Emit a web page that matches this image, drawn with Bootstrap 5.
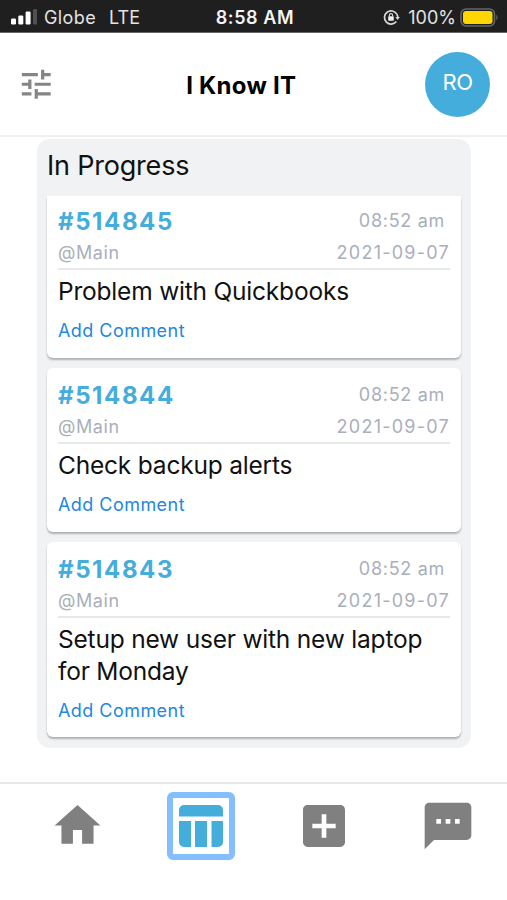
<!DOCTYPE html>
<html lang="en">
<head>
<meta charset="utf-8">
<meta name="viewport" content="width=device-width, initial-scale=1">
<title>I Know IT</title>
<link href="https://cdn.jsdelivr.net/npm/bootstrap@5.3.0/dist/css/bootstrap.min.css" rel="stylesheet">
<style>
body{font-family:Inter,"Liberation Sans",sans-serif;background:#fff;color:#111;height:900px;overflow:hidden}
.status-bar{height:33px;background:#1f1f1f;color:#e4e4e4;font-size:18px;line-height:33px;border-bottom:1px solid #666;padding:2px 8px 0 11px}
.status-side{flex:1 1 0}
.status-time{color:#f4f4f4;letter-spacing:.6px}
.carrier{margin-left:7px;letter-spacing:.4px}
.network{margin-left:13px}
.app-header{height:104px;border-bottom:2px solid #eeeff0;padding:0 17px}
.app-title{font-size:24px;font-weight:700;color:#000;letter-spacing:.25px;padding:5px 22px 0 0}
.avatar{width:65px;height:65px;background:#44addb;font-size:22px;letter-spacing:-.6px;padding-bottom:3px}
.board-column{margin:2px 36px 0 37px;height:609px;background:#f0f2f3;border-radius:13px;padding:0 10px}
.column-title{font-size:27px;line-height:34px;padding-top:10px;margin-bottom:13px;color:#111;letter-spacing:-.2px}
.ticket{border:0;border-radius:6px;padding:11px 11px 0;height:164px;margin-bottom:10px;box-shadow:0 2px 2px rgba(0,0,0,.27)}
.ticket:first-of-type{border-radius:1px 1px 6px 6px;height:162px;padding-top:9px}
.ticket-tall{height:195px}
.ticket-id{font-size:24px;line-height:34px;margin-bottom:-2px;font-weight:700;color:#44addb;letter-spacing:1.6px}
.ticket-meta{font-size:18px;line-height:31px;color:#a9afbb;letter-spacing:.6px}
.ticket-time{letter-spacing:.7px;margin-right:5px}
.date{letter-spacing:1.25px}
.ticket-rule{border-bottom:2px solid #e6e8ea;height:65px}
.ticket-text{font-size:24.5px;line-height:32px;padding-top:5px;letter-spacing:-.2px}
.ticket-link{font-size:18px;line-height:30px;margin-top:9px;color:#2387dc;letter-spacing:.45px}
.tab-bar{margin-top:34px;height:118px;border-top:2px solid #e8e7e8;padding:8px 31px 0 50px}
.tab-item{padding-top:6px}
.tab-add{margin-right:8px}
.tab-active{margin-left:2px;width:68px;height:68px;border:6px solid #84beff;border-radius:6px}
</style>
<script src="https://cdn.jsdelivr.net/npm/bootstrap@5.3.0/dist/js/bootstrap.bundle.min.js"></script>
</head>
<body>
<div class="status-bar d-flex align-items-center">
  <div class="status-side d-flex align-items-center">
    <svg width="26" height="16" viewBox="0 0 26 16" fill="#fff"><rect x="0" y="9.5" width="5" height="6" rx="1.2"/><rect x="7.3" y="6.500" width="5" height="9" rx="1.200"/><rect x="14.600" y="2.500" width="5" height="13" rx="1.200"/><rect x="22" y="0" width="4.500" height="15.500" rx="1.200" fill="#505050"/></svg>
    <span class="carrier">Globe</span><span class="network">LTE</span>
  </div>
  <div class="status-time fw-semibold">8:58 AM</div>
  <div class="status-side d-flex align-items-center justify-content-end">
    <svg width="17" height="17" viewBox="0 0 17 17" fill="none" stroke="#d8d8d8" stroke-width="1.700"><path d="M13.800 5.200A6.600 6.600 0 1 0 13.300 12.500M13.800 5.200Q14.900 7 14.800 8.200"/><path d="M12.300 8h4.600l-2.300 3z" fill="#d8d8d8" stroke="none"/><rect x="5.200" y="7.300" width="5.600" height="4.400" rx=".6" fill="#eee" stroke="none"/><path d="M6.400 7.500V6.300a1.600 1.600 0 0 1 3.200 0v1.200" stroke-width="1.200"/></svg>
    <span class="ms-2">100%</span>
    <svg class="ms-1" width="39" height="19" viewBox="0 0 39 19"><rect x="1" y="1" width="33.500" height="17" rx="5" fill="none" stroke="#666" stroke-width="1.600"/><rect x="3" y="3" width="29.500" height="13" rx="3" fill="#fed602"/><path d="M36.300 6.500q2.600 3 0 6z" fill="#666"/></svg>
  </div>
</div>
<header class="app-header d-flex align-items-center justify-content-between">
  <svg class="me-4" width="38.500" height="38.500" viewBox="0 0 24 24" fill="#858585"><path d="M3 17v2h6v-2H3zM3 5v2h10V5H3zm10 16v-2h8v-2h-8v-2h-2v6h2zM7 9v2H3v2h4v2h2V9H7zm14 4v-2H11v2h10zm-6-4h2V7h4V5h-4V3h-2v6z"/></svg>
  <h1 class="app-title m-0">I Know IT</h1>
  <div class="avatar rounded-circle text-white d-flex align-items-center justify-content-center">RO</div>
</header>
<main>
  <section class="board-column overflow-hidden">
    <h2 class="column-title fw-normal">In Progress</h2>
    <article class="card ticket">
      <div class="ticket-rule">
        <div class="d-flex justify-content-between"><span class="ticket-id">#514845</span><span class="ticket-meta ticket-time">08:52 am</span></div>
        <div class="d-flex justify-content-between ticket-meta"><span class="site">@Main</span><span class="date">2021-09-07</span></div>
      </div>
      <div class="ticket-text">Problem with Quickbooks</div>
      <a class="ticket-link text-decoration-none" href="#">Add Comment</a>
    </article>
    <article class="card ticket">
      <div class="ticket-rule">
        <div class="d-flex justify-content-between"><span class="ticket-id">#514844</span><span class="ticket-meta ticket-time">08:52 am</span></div>
        <div class="d-flex justify-content-between ticket-meta"><span class="site">@Main</span><span class="date">2021-09-07</span></div>
      </div>
      <div class="ticket-text">Check backup alerts</div>
      <a class="ticket-link text-decoration-none" href="#">Add Comment</a>
    </article>
    <article class="card ticket ticket-tall">
      <div class="ticket-rule">
        <div class="d-flex justify-content-between"><span class="ticket-id">#514843</span><span class="ticket-meta ticket-time">08:52 am</span></div>
        <div class="d-flex justify-content-between ticket-meta"><span class="site">@Main</span><span class="date">2021-09-07</span></div>
      </div>
      <div class="ticket-text">Setup new user with new laptop<br>for Monday</div>
      <a class="ticket-link text-decoration-none" href="#">Add Comment</a>
    </article>
  </section>
</main>
<nav class="tab-bar d-flex justify-content-between align-items-start">
  <a href="#" aria-label="Home" class="tab-item"><svg width="55" height="55" viewBox="0 0 24 24" fill="#808080"><path d="M10 20v-6h4v6h5v-8h3L12 3 2 12h3v8z"/></svg></a>
  <a href="#" aria-label="Board" class="tab-active d-flex align-items-center justify-content-center"><svg width="44" height="42" viewBox="0 0 44 42" fill="#44addb"><path d="M5 0h34a5 5 0 0 1 5 5v6.500H0V5a5 5 0 0 1 5-5zM0 16h12v26H5a5 5 0 0 1-5-5zM16 16h12v26H16zM32.500 16H44v21a5 5 0 0 1-5 5h-6.500z"/></svg></a>
  <a href="#" aria-label="Add" class="tab-item tab-add"><svg width="56" height="56" viewBox="0 0 24 24" fill="#808080"><path d="M19 3H5c-1.110 0-2 .9-2 2v14c0 1.100.89 2 2 2h14c1.100 0 2-.9 2-2V5c0-1.100-.9-2-2-2zm-2 10h-4v4h-2v-4H7v-2h4V7h2v4h4v2z"/></svg></a>
  <a href="#" aria-label="Messages" class="tab-item"><svg width="56" height="56" viewBox="0 0 24 24" fill="#808080"><path d="M20 2H4c-1.100 0-1.990.9-1.990 2L2 22l4-4h14c1.100 0 2-.9 2-2V4c0-1.100-.9-2-2-2zM9 11H7V9h2v2zm4 0h-2V9h2v2zm4 0h-2V9h2v2z"/></svg></a>
</nav>
</body>
</html>
